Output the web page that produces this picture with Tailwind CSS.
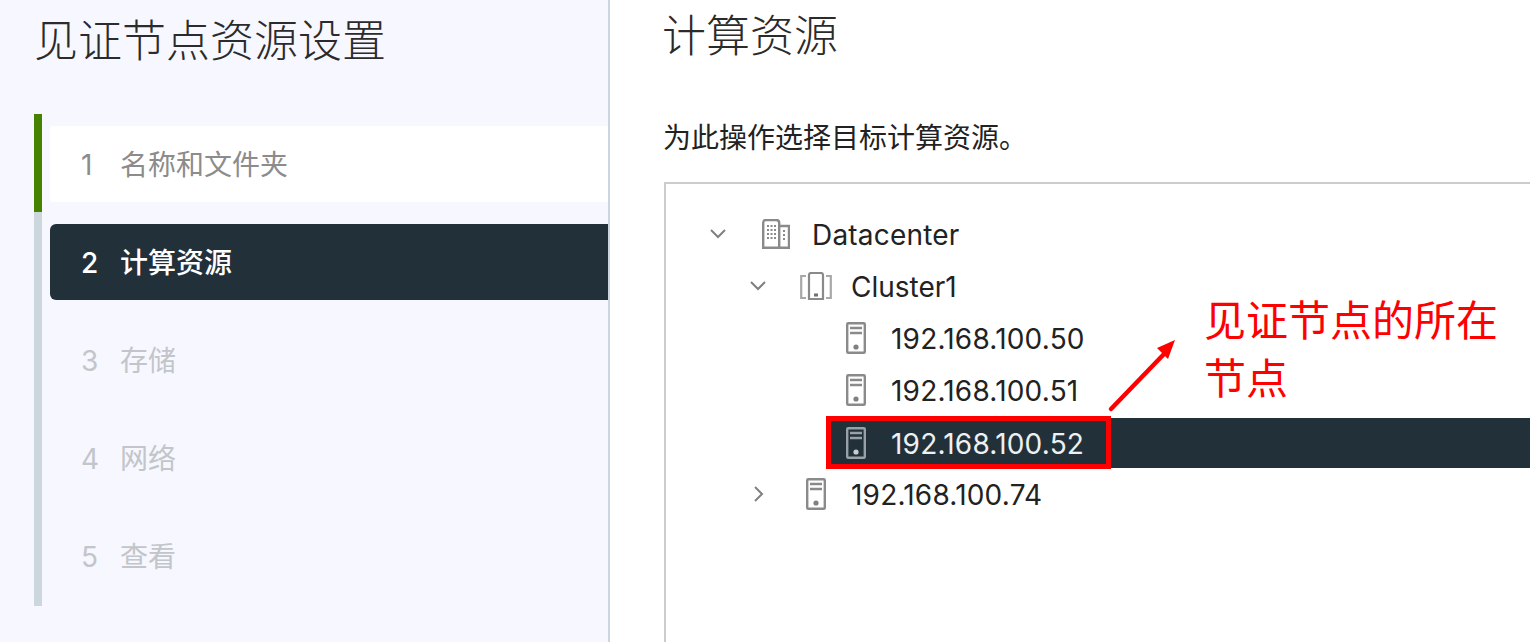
<!DOCTYPE html>
<html lang="zh-CN">

<head>
    <meta charset="UTF-8">
    <meta name="viewport" content="width=device-width, initial-scale=1.0">
    <title>见证节点资源设置</title>
    <script src="https://cdn.jsdelivr.net/npm/@tailwindcss/browser@4"></script>
</head>

<body class="bg-white font-['Inter','Noto_Sans_CJK_SC',sans-serif]">
    <div class="relative flex h-[642px] w-[1530px] overflow-hidden">
        <!-- Wizard sidebar -->
        <aside class="h-full w-[610px] shrink-0 border-r-2 border-[#ccd6e2] bg-[#f6f7ff] pl-[34px]">
            <h1 class="h-[114px] pt-[11px] text-[44px] leading-[60px] font-light text-[#2b2b2b]">见证节点资源设置</h1>
            <div class="flex h-[492px]">
                <div class="w-2 shrink-0 bg-[#ccd6dd]">
                    <div class="h-[98px] bg-[#468200]"></div>
                </div>
                <ol class="ml-2 flex flex-1 flex-col gap-[22px] pt-3 text-[28px]">
                    <li class="flex h-[76px] items-center rounded-l-[3px] bg-white pt-[2px] pl-[31px] text-[#8c8c8c]"><span class="w-[39px]">1</span>名称和文件夹</li>
                    <li class="flex h-[76px] items-center rounded-l-[6px] bg-[#22303a] pt-[2px] pl-[31px] font-medium text-white"><span class="w-[39px]">2</span>计算资源</li>
                    <li class="flex h-[76px] items-center pt-[2px] pl-[31px] text-[#c2c5c9]"><span class="w-[39px]">3</span>存储</li>
                    <li class="flex h-[76px] items-center pt-[2px] pl-[31px] text-[#c2c5c9]"><span class="w-[39px]">4</span>网络</li>
                    <li class="flex h-[76px] items-center pt-[2px] pl-[31px] text-[#c2c5c9]"><span class="w-[39px]">5</span>查看</li>
                </ol>
            </div>
        </aside>

        <!-- Compute resource step -->
        <main class="-ml-px flex-1 pl-[55px]">
            <h2 class="-ml-[2px] h-[118px] pt-[6px] text-[44px] leading-[60px] font-light text-[#2b2b2b]">计算资源</h2>
            <p class="-ml-px h-[64px] text-[28px] leading-[40px] text-[#222]">为此操作选择目标计算资源。</p>
            <div class="h-[500px] border-t-2 border-l-2 border-[#cccccc] pt-6 text-[28px] tracking-[0.2px] text-[#222]">
                <div class="flex h-[52px] items-center pl-[44px]">
                    <svg class="h-[10px] w-4" viewBox="0 0 16 10" fill="none" stroke="#808080" stroke-width="2"><path d="M1 1l7 7 7-7"/></svg>
                    <svg class="ml-9 h-[30px] w-7" viewBox="0 0 28 30" fill="none" stroke="#8a8a8a" stroke-width="2.4"><path d="M1.2 4q0-3 3-3h10q3 0 3 3v24.8H1.2zM17.2 7H27v21.8h-9.8"/><path d="M5 7h9M5 11h9M5 15h9M5 19h9M21 12h3M21 16h3M21 20h3" stroke-width="2" stroke-dasharray="2 1.5"/></svg>
                    <span class="mt-[2px] ml-[22px]">Datacenter</span>
                </div>
                <div class="flex h-[52px] items-center pl-[84px]">
                    <svg class="h-[10px] w-4" viewBox="0 0 16 10" fill="none" stroke="#808080" stroke-width="2"><path d="M1 1l7 7 7-7"/></svg>
                    <svg class="ml-[34px] h-7 w-8" viewBox="0 0 32 28" fill="none" stroke="#8a8a8a" stroke-width="2.2"><path d="M9 3q0-2 2-2h10q2 0 2 2v24H9z"/><path d="M6 4H1.2v22H6M26 4h4.8v22H26" stroke="#a8a8a8"/><path d="M14 23h4" stroke-width="3" stroke="#707070"/></svg>
                    <span class="mt-[2px] ml-[19px] tracking-normal">Cluster1</span>
                </div>
                <div class="flex h-[52px] items-center pl-[180px]">
                    <svg class="h-8 w-5" viewBox="0 0 20 32" fill="none" stroke="#8a8a8a" stroke-width="2.4"><rect x="1.2" y="1.2" width="17.6" height="29.6" rx="1"/><path d="M4 6h12M4 11h12"/><circle cx="10" cy="25" r="2.6" fill="#808080" stroke="none"/></svg>
                    <span class="mt-[2px] ml-[25px]">192.168.100.50</span>
                </div>
                <div class="flex h-[52px] items-center pl-[180px]">
                    <svg class="h-8 w-5" viewBox="0 0 20 32" fill="none" stroke="#8a8a8a" stroke-width="2.4"><rect x="1.2" y="1.2" width="17.6" height="29.6" rx="1"/><path d="M4 6h12M4 11h12"/><circle cx="10" cy="25" r="2.6" fill="#808080" stroke="none"/></svg>
                    <span class="mt-[2px] ml-[25px]">192.168.100.51</span>
                </div>
                <div class="h-[52px] pt-[2px] pl-[164px]">
                    <div class="flex h-[50px] items-center bg-[#22303a] pl-4 text-[#eef0f1]">
                        <svg class="h-8 w-5" viewBox="0 0 20 32" fill="none" stroke="#98a1a7" stroke-width="2.4"><rect x="1.2" y="1.2" width="17.6" height="29.6" rx="1"/><path d="M4 6h12M4 11h12"/><circle cx="10" cy="25" r="2.6" fill="#c8ccd0" stroke="none"/></svg>
                        <span class="mt-[2px] ml-[25px]">192.168.100.52</span>
                    </div>
                </div>
                <div class="flex h-[52px] items-center pl-[88px]">
                    <svg class="h-4 w-[10px]" viewBox="0 0 10 16" fill="none" stroke="#808080" stroke-width="2"><path d="M1 1l7 7-7 7"/></svg>
                    <svg class="ml-[42px] h-8 w-5" viewBox="0 0 20 32" fill="none" stroke="#8a8a8a" stroke-width="2.4"><rect x="1.2" y="1.2" width="17.6" height="29.6" rx="1"/><path d="M4 6h12M4 11h12"/><circle cx="10" cy="25" r="2.6" fill="#808080" stroke="none"/></svg>
                    <span class="mt-[2px] ml-[25px]">192.168.100.74</span>
                </div>
            </div>
        </main>

        <!-- Red annotation over the tree -->
        <div class="absolute top-[416px] left-[826px] h-[53px] w-[285px] border-[5px] border-[#ff0000]"></div>
        <svg class="absolute top-[335px] left-[1105px] h-[80px] w-[76px]" viewBox="0 0 76 80" fill="none">
            <path d="M6 74L60 18" stroke="#ff0000" stroke-width="4.5" stroke-linecap="round"/>
            <path d="M70 5L52 13L63 24Z" fill="#ff0000"/>
        </svg>
        <p class="absolute top-[292px] left-[1204px] w-[300px] text-[42px] leading-[58px] text-[#ff0000]">见证节点的所在节点</p>
    </div>
</body>

</html>
